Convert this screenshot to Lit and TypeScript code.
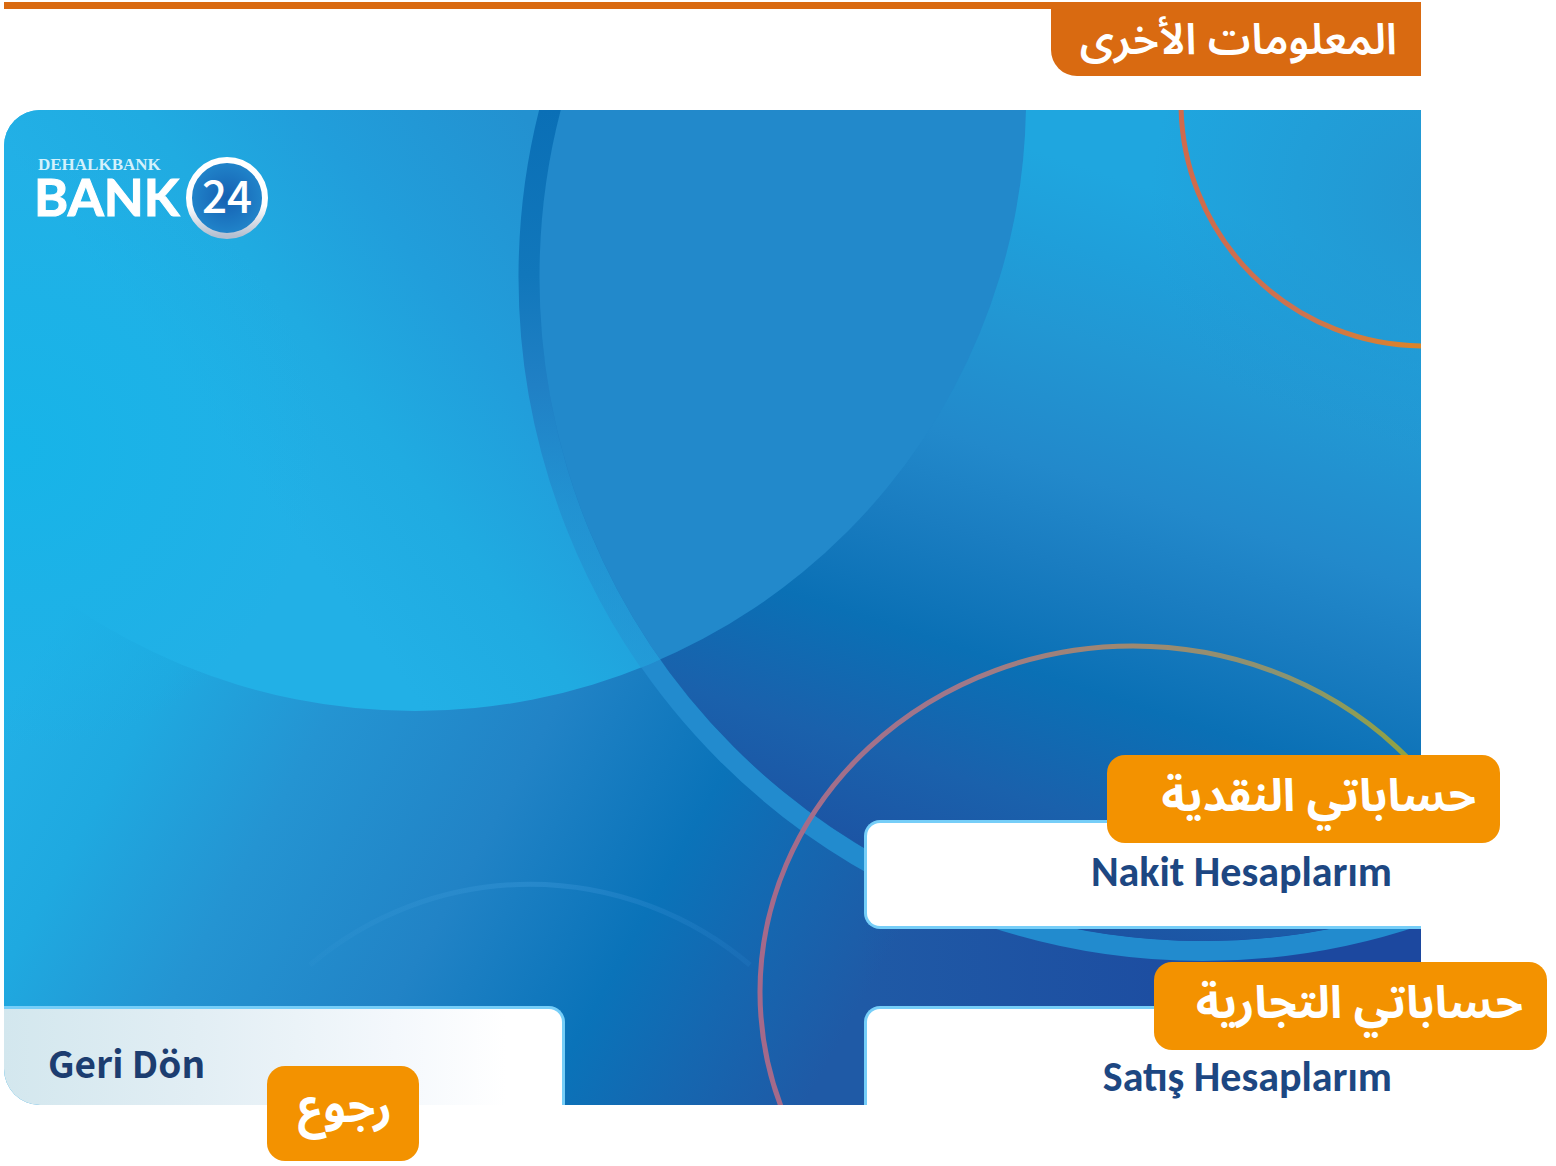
import { LitElement, html, css, svg } from "lit";
import { customElement } from "lit/decorators.js";

@customElement("bank-backdrop")
class BankBackdrop extends LitElement {
  static styles = css`
    :host { display: block; overflow: hidden; }
    svg { display: block; width: 100%; height: 100%; }
  `;

  private stops(list: [number, string][]) {
    return list.map(([o, c]) => svg`<stop offset=${o} stop-color=${c}></stop>`);
  }

  render() {
    return html`
      <svg viewBox="4 110 1417 995" preserveAspectRatio="none" aria-hidden="true">
        <defs>
          <linearGradient id="base" gradientUnits="userSpaceOnUse" x1="0" y1="720" x2="780" y2="1150">
            ${this.stops([[0, "#22b0e6"], [0.14, "#1fa9e0"], [0.32, "#2494d2"], [0.54, "#2183c6"], [0.74, "#0a73b9"], [0.86, "#1567b0"], [1, "#1f5aa6"]])}
          </linearGradient>
          <linearGradient id="disc" gradientUnits="userSpaceOnUse" x1="230" y1="450" x2="580" y2="190">
            ${this.stops([[0, "#22b0e6"], [0.3, "#20abe1"], [0.6, "#219edb"], [1, "#2391d0"]])}
          </linearGradient>
          <radialGradient id="glow" gradientUnits="userSpaceOnUse" cx="20" cy="450" r="300">
            <stop offset="0" stop-color="#17b4e8"></stop>
            <stop offset="1" stop-color="#17b4e8" stop-opacity="0"></stop>
          </radialGradient>
          <linearGradient id="right" gradientUnits="userSpaceOnUse" x1="1220" y1="110" x2="950" y2="938">
            ${this.stops([[0, "#1fa6df"], [0.11, "#1fa6df"], [0.2, "#1f9fda"], [0.3, "#2297d3"], [0.45, "#2289cb"], [0.55, "#1a7dc1"], [0.68, "#0a70b5"], [0.82, "#1a61ac"], [1, "#1d4d9f"]])}
          </linearGradient>
          <radialGradient id="corner" gradientUnits="userSpaceOnUse" cx="1440" cy="200" r="290">
            <stop offset="0" stop-color="#2396d1"></stop>
            <stop offset="1" stop-color="#2396d1" stop-opacity="0"></stop>
          </radialGradient>
          <linearGradient id="upper" gradientUnits="userSpaceOnUse" x1="0" y1="110" x2="0" y2="660">
            <stop offset="0" stop-color="#0a6fb6"></stop>
            <stop offset="0.3" stop-color="#1177bb"></stop>
            <stop offset="0.5" stop-color="#2080c5"></stop>
            <stop offset="0.72" stop-color="#2289cb" stop-opacity="0.6"></stop>
            <stop offset="1" stop-color="#2492d2" stop-opacity="0.5"></stop>
          </linearGradient>
          <linearGradient id="deep" gradientUnits="userSpaceOnUse" x1="860" y1="0" x2="1300" y2="0">
            <stop offset="0" stop-color="#1c489f" stop-opacity="0"></stop>
            <stop offset="1" stop-color="#1c489f"></stop>
          </linearGradient>
          <linearGradient id="gold" gradientUnits="userSpaceOnUse" x1="760" y1="0" x2="1421" y2="0">
            ${this.stops([[0, "#a5698a"], [0.3, "#a0788a"], [0.55, "#9f8870"], [0.8, "#8b9470"], [1, "#92a43c"]])}
          </linearGradient>
          <linearGradient id="orange" gradientUnits="userSpaceOnUse" x1="1180" y1="0" x2="1421" y2="0">
            ${this.stops([[0, "#d06a4c"], [0.5, "#cc7350"], [1, "#dc8428"]])}
          </linearGradient>
          <linearGradient id="faint" gradientUnits="userSpaceOnUse" x1="310" y1="0" x2="750" y2="0">
            <stop offset="0" stop-color="#3b9bd8" stop-opacity="0.1"></stop>
            <stop offset="0.5" stop-color="#3090d2" stop-opacity="0.6"></stop>
            <stop offset="1" stop-color="#2b84cc" stop-opacity="0.2"></stop>
          </linearGradient>
          <clipPath id="inRing"><circle cx="1203" cy="277" r="664"></circle></clipPath>
          <clipPath id="inDisc"><circle cx="415" cy="100" r="611"></circle></clipPath>
        </defs>
        <rect x="4" y="110" width="1417" height="995" fill="url(#base)"></rect>
        <rect x="860" y="860" width="561" height="245" fill="url(#deep)"></rect>
        <circle cx="1203" cy="277" r="674" fill="none" stroke="#228bce" stroke-width="20"></circle>
        <circle cx="415" cy="100" r="611" fill="url(#disc)"></circle>
        <rect x="4" y="110" width="400" height="995" fill="url(#glow)"></rect>
        <g clip-path="url(#inRing)">
          <rect x="500" y="110" width="921" height="995" fill="url(#right)"></rect>
          <rect x="1100" y="110" width="321" height="400" fill="url(#corner)"></rect>
          <circle cx="415" cy="100" r="611" fill="#2289cb"></circle>
        </g>
        <g clip-path="url(#inDisc)">
          <circle cx="1203" cy="277" r="674" fill="none" stroke="url(#upper)" stroke-width="21"></circle>
        </g>
        <path d="M310 965 A340 340 0 0 1 750 965" fill="none" stroke="url(#faint)" stroke-width="5"></path>
        <circle cx="1424" cy="103" r="243" fill="none" stroke="url(#orange)" stroke-width="5"></circle>
        <ellipse cx="1133" cy="992" rx="373" ry="346" fill="none" stroke="url(#gold)" stroke-width="5"></ellipse>
      </svg>
    `;
  }
}

@customElement("bank-logo")
class BankLogo extends LitElement {
  static styles = css`
    :host { display: block; }
    svg { display: block; }
    .small { font: 700 17px "Liberation Serif", serif; fill: #d3f1fc; }
    .word { font: 700 52px Lato, sans-serif; fill: #fff; stroke: #fff; stroke-width: 1; }
    .num { font: 500 44px "Noto Sans CJK SC", sans-serif; fill: #fff; }
  `;
  render() {
    return html`
      <svg width="250" height="90" viewBox="0 0 250 90" role="img" aria-label="Halkbank Bank24">
        <defs>
          <linearGradient id="rim" x1="0" y1="0" x2="0" y2="1">
            <stop offset="0.6" stop-color="#fff"></stop>
            <stop offset="1" stop-color="#b4bfd0"></stop>
          </linearGradient>
          <radialGradient id="core">
            <stop offset="0" stop-color="#1560b2"></stop>
            <stop offset="1" stop-color="#2186cb"></stop>
          </radialGradient>
        </defs>
        <text class="small" x="10" y="17">DEHALKBANK</text>
        <text class="word" x="6" y="63">BANK</text>
        <circle cx="199" cy="45" r="38" fill="url(#core)" stroke="url(#rim)" stroke-width="6"></circle>
        <text class="num" x="199" y="60" text-anchor="middle">24</text>
      </svg>
    `;
  }
}

@customElement("app-root")
class AppRoot extends LitElement {
  static styles = css`
    :host {
      display: block;
      background: #fff;
      padding: 2px 135px 61px 4px;
    }
    * { box-sizing: border-box; }
    .heading {
      display: flex;
      justify-content: flex-end;
      border-top: 7px solid #d96a11;
    }
    .title {
      margin: 0;
      height: 67px;
      padding: 0 24px 0 29px;
      border-radius: 0 0 0 26px;
      background: #d96a11;
      color: #fff;
      font: 600 43px/64px "Noto Sans Arabic", "Noto Sans", sans-serif;
    }
    .card {
      position: relative;
      display: flex;
      flex-direction: column;
      justify-content: space-between;
      margin-top: 34px;
      aspect-ratio: 1417 / 995;
    }
    .backdrop {
      position: absolute;
      inset: 0;
      border-radius: 36px 0 0 36px;
    }
    .logo { position: relative; padding: 43px 24px; }
    .actions {
      position: relative;
      display: grid;
      grid-template-columns: 561fr 299fr 557fr;
      grid-template-rows: 109px 99px;
      row-gap: 77px;
    }
    .action {
      position: relative;
      display: flex;
      align-items: flex-start;
      justify-content: flex-end;
      border: 0 solid #76cef8;
      margin: 0;
      padding: 0 29px;
      background: #fff;
      color: #1d4782;
      font: 700 42px/52px Carlito, Lato, sans-serif;
      text-align: right;
      cursor: pointer;
    }
    .cash {
      grid-area: 1 / 3;
      padding-top: 23px;
      border-width: 3px 0 3px 3px;
      border-radius: 16px 0 0 16px;
    }
    .sales {
      grid-area: 2 / 3;
      padding-top: 42px;
      border-width: 3px 0 0 3px;
      border-radius: 16px 0 0 0;
    }
    .back {
      grid-area: 2 / 1;
      justify-content: flex-start;
      padding: 27px 44px 0;
      border-width: 3px 3px 0 0;
      border-radius: 0 16px 0 36px;
      background: linear-gradient(90deg, #d3e7ee, #e2eef4 35%, #f4f8fc 70%, #fff 90%);
      color: #1c3d70;
      font: 700 37px/52px "Noto Sans CJK SC", "Noto Sans", sans-serif;
    }
    .badge {
      position: absolute;
      height: 88px;
      padding: 0 24px;
      border-radius: 18px;
      background: #f39200;
      color: #fff;
      font: 700 45px/84px "Noto Sans Arabic", "Noto Sans", sans-serif;
      white-space: nowrap;
    }
    .cash .badge { width: 393px; right: -79px; top: -68px; }
    .sales .badge { width: 393px; right: -126px; top: -47px; }
    .back .badge { width: 152px; height: 95px; left: 263px; top: 57px; padding: 0 27px; }
  `;

  render() {
    return html`
      <header class="heading">
        <h1 class="title" dir="rtl" lang="ar">المعلومات الأخرى</h1>
      </header>
      <main class="card">
        <bank-backdrop class="backdrop"></bank-backdrop>
        <bank-logo class="logo"></bank-logo>
        <nav class="actions" lang="tr">
          <button class="action cash">
            Nakit Hesaplarım
            <span class="badge" dir="rtl" lang="ar">حساباتي النقدية</span>
          </button>
          <button class="action back">
            Geri Dön
            <span class="badge" dir="rtl" lang="ar">رجوع</span>
          </button>
          <button class="action sales">
            Satış Hesaplarım
            <span class="badge" dir="rtl" lang="ar">حساباتي التجارية</span>
          </button>
        </nav>
      </main>
    `;
  }
}
